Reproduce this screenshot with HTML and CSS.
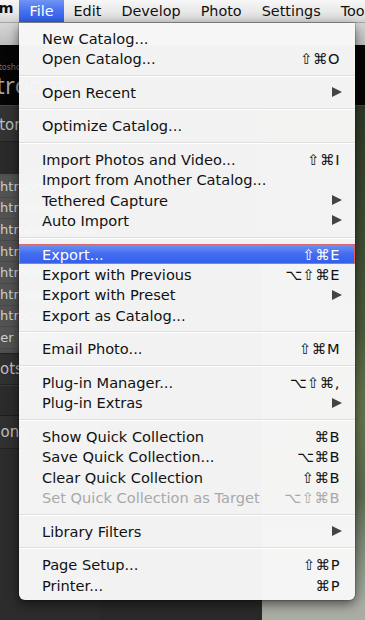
FILE: index.html
```html
<!DOCTYPE html>
<html lang="en">
<head>
<meta charset="utf-8">
<title>Lightroom File menu</title>
<link rel="stylesheet" href="styles.css">
</head>
<body>
<div class="screen">
  <nav class="menubar">
    <span class="mb app">Lightroom</span>
    <span class="mb active">File</span>
    <span class="mb">Edit</span>
    <span class="mb">Develop</span>
    <span class="mb">Photo</span>
    <span class="mb">Settings</span>
    <span class="mb">Tools</span>
  </nav>

  <div class="app">
    <div class="titlebar"></div>
    <div class="identity">
      <div class="id-text">
        <span class="id-small">Adobe Photoshop</span>
        <span class="id-big">Lightroom</span>
      </div>
    </div>
    <div class="work">
      <aside class="left">
        <div class="phead nav">Navigator</div>
        <div class="pgap"></div>
        <div class="plist">
          <div class="prow">Lightroom B&amp;W</div>
          <div class="prow">Lightroom Color</div>
          <div class="prow">Lightroom Effects</div>
          <div class="prow">Lightroom General</div>
          <div class="prow">Lightroom Sharpen</div>
          <div class="prow">Lightroom Tone</div>
          <div class="prow">Lightroom Video</div>
          <div class="prow user">User Presets</div>
        </div>
        <div class="phead snap">Snapshots</div>
        <div class="pgap2"></div>
        <div class="phead coll">Collections</div>
      </aside>
      <main class="center"></main>
      <section class="photo"></section>
    </div>
  </div>

  <div class="menu">
    <div class="item">New Catalog...</div>
    <div class="item">Open Catalog...<span class="sc">⇧⌘O</span></div>
    <div class="sep"></div>
    <div class="item">Open Recent<span class="arrow"></span></div>
    <div class="sep"></div>
    <div class="item">Optimize Catalog...</div>
    <div class="sep"></div>
    <div class="item">Import Photos and Video...<span class="sc">⇧⌘I</span></div>
    <div class="item">Import from Another Catalog...</div>
    <div class="item">Tethered Capture<span class="arrow"></span></div>
    <div class="item">Auto Import<span class="arrow"></span></div>
    <div class="sep"></div>
    <div class="item selected">Export...<span class="sc">⇧⌘E</span></div>
    <div class="item">Export with Previous<span class="sc">⌥⇧⌘E</span></div>
    <div class="item">Export with Preset<span class="arrow"></span></div>
    <div class="item">Export as Catalog...</div>
    <div class="sep"></div>
    <div class="item">Email Photo...<span class="sc">⇧⌘M</span></div>
    <div class="sep"></div>
    <div class="item">Plug-in Manager...<span class="sc">⌥⇧⌘,</span></div>
    <div class="item">Plug-in Extras<span class="arrow"></span></div>
    <div class="sep"></div>
    <div class="item">Show Quick Collection<span class="sc">⌘B</span></div>
    <div class="item">Save Quick Collection...<span class="sc">⌥⌘B</span></div>
    <div class="item">Clear Quick Collection<span class="sc">⇧⌘B</span></div>
    <div class="item disabled">Set Quick Collection as Target<span class="sc">⌥⇧⌘B</span></div>
    <div class="sep"></div>
    <div class="item">Library Filters<span class="arrow"></span></div>
    <div class="sep"></div>
    <div class="item">Page Setup...<span class="sc">⇧⌘P</span></div>
    <div class="item">Printer...<span class="sc">⌘P</span></div>
  </div>
</div>
</body>
</html>
```

FILE: styles.css
```css
* { box-sizing: border-box; }
html, body { margin: 0; padding: 0; }
body {
  width: 365px;
  height: 620px;
  overflow: hidden;
  font-family: "DejaVu Sans", "Liberation Sans", sans-serif;
  background: #262626;
}
.screen {
  position: relative;
  width: 365px;
  height: 620px;
  overflow: hidden;
  display: flex;
  flex-direction: column;
}

/* menubar */
.menubar {
  height: 23px;
  flex: none;
  display: flex;
  align-items: stretch;
  background: linear-gradient(#f7f7f7, #e8e8e8 55%, #d3d3d3);
  border-bottom: 1px solid #a3a3a3;
  white-space: nowrap;
  font-size: 14.4px;
  color: #111;
}
.mb {
  display: flex;
  align-items: center;
  padding: 0 10px 1px 10px;
}
.mb.app {
  font-weight: bold;
  margin-left: -80px;
  padding-right: 6px;
}
.mb.active {
  color: #fff;
  background: linear-gradient(#7095f4, #4570ee 50%, #2d5be7);
}

/* app underneath */
.app {
  flex: 1;
  display: flex;
  flex-direction: column;
  min-height: 0;
}
.titlebar {
  height: 22px;
  flex: none;
  background: linear-gradient(#d6d6d6, #bdbdbd);
}
.identity {
  height: 61px;
  flex: none;
  background: #050505;
  border-bottom: 1px solid #444;
  display: flex;
  align-items: flex-end;
  padding-bottom: 8px;
}
.id-text {
  display: flex;
  flex-direction: column;
  margin-left: -50px;
  line-height: 1;
  gap: 1px;
}
.id-small { font-size: 8px; margin-left: 6px; color: #6f6f6f; }
.id-big { font-size: 24px; font-family: "Open Sans", sans-serif; color: #a4a4a4; }

.work {
  flex: 1;
  display: flex;
  min-height: 0;
}
.left {
  width: 160px;
  margin-left: -60px;
  flex: none;
  background: #2c2c2c;
  display: flex;
  flex-direction: column;
  color: #c4c4c4;
  white-space: nowrap;
}
.phead {
  height: 36px;
  display: flex;
  align-items: center;
  background: #393939;
  border-bottom: 1px solid #222;
  font-size: 15px;
  color: #bdbdbd;
}
.phead.nav { padding-left: 7px; background: #333; padding-top: 3px; }
.phead.snap { padding-left: 5px; height: 32px; background: #303030; border-top: 1px solid #222; }
.phead.coll { padding-left: 5px; height: 34px; background: #303030; border-top: 1px solid #1c1c1c; }
.pgap { height: 32px; background: #2a2a2a; }
.pgap2 { height: 30px; background: #2b2b2b; border-top: 1px solid #3a3a3a; }
.plist {
  background: #4f4f4f;
  padding: 2px 0 4px;
}
.prow {
  height: 21.6px;
  display: flex;
  align-items: center;
  padding-left: 41px;
  font-size: 13px;
  color: #cfcfcf;
  background: #525252;
  border-bottom: 1px solid #484848;
}
.prow.user { padding-left: 44px; }
.center {
  flex: 1;
  background: #2a2a2a;
}
.photo {
  width: 103px;
  flex: none;
  background:
    radial-gradient(ellipse 40px 60px at 30% 35%, rgba(110,130,110,.5), transparent),
    radial-gradient(ellipse 60px 90px at 80% 60%, rgba(120,140,90,.6), transparent),
    linear-gradient(#2f3928, #4b5a3a 45%, #5b6a50 75%, #a9ada3 97%);
}

/* File menu */
.menu {
  position: absolute;
  top: 23px;
  left: 19px;
  width: 336px;
  padding: 5px 0 5px;
  background: rgba(247, 247, 247, 0.98);
  border-radius: 0 0 6px 6px;
  box-shadow: 0 4px 12px rgba(0,0,0,.55), 0 0 0 1px rgba(0,0,0,.15);
  font-size: 14.6px;
  color: #111;
  white-space: nowrap;
}
.item {
  height: 20.33px;
  display: flex;
  align-items: center;
  padding: 0 15px 0 23px;
}
.sc {
  margin-left: auto;
  letter-spacing: 0.5px;
}
.arrow {
  margin-left: auto;
  margin-right: -2px;
  width: 0;
  height: 0;
  border-left: 10px solid #444;
  border-top: 5.5px solid transparent;
  border-bottom: 5.5px solid transparent;
}
.item.selected {
  color: #fff;
  background: linear-gradient(#6d92f4, #426cf0 50%, #335fea);
  border: 1px solid #d8686a;
  padding-left: 22px;
  padding-right: 14px;
}
.item.disabled { color: #a9a9a9; }
.sep {
  height: 13.33px;
  display: flex;
  align-items: center;
}
.sep::before {
  content: "";
  display: block;
  width: 100%;
  height: 1px;
  background: #dedede;
  box-shadow: 0 1px 0 #fff;
}
```
